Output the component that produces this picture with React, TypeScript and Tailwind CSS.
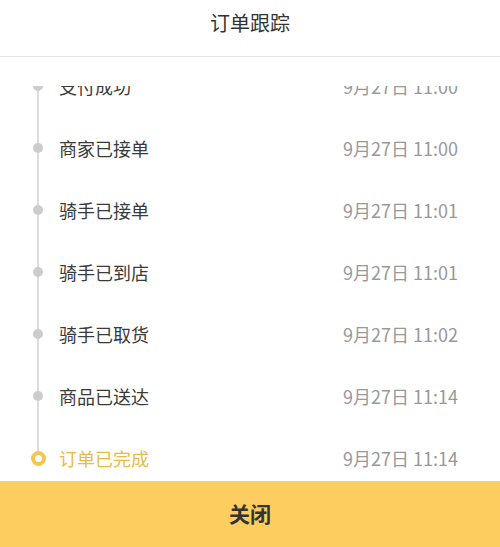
const steps = [
  { label: "支付成功", time: "9月27日 11:00" },
  { label: "商家已接单", time: "9月27日 11:00" },
  { label: "骑手已接单", time: "9月27日 11:01" },
  { label: "骑手已到店", time: "9月27日 11:01" },
  { label: "骑手已取货", time: "9月27日 11:02" },
  { label: "商品已送达", time: "9月27日 11:14" },
  { label: "订单已完成", time: "9月27日 11:14", done: true },
];

function Step({ label, time, done, last }: { label: string; time: string; done?: boolean; last: boolean }) {
  return (
    <div className="flex h-[62px] items-center">
      <div className="relative flex h-full w-[76px] shrink-0 items-center justify-center">
        <div className={`absolute left-[37px] top-0 w-[2px] bg-[#dcdcdc] ${last ? "bottom-1/2" : "bottom-0"}`} />
        {done ? (
          <div className="relative h-[15px] w-[15px] rounded-full border-[4.5px] border-[#f3c64f] bg-white" />
        ) : (
          <div className="relative h-[10px] w-[10px] rounded-full bg-[#cccccc]" />
        )}
      </div>
      <div className={`-ml-[17px] flex-1 text-[18px] ${done ? "text-[#e9bb42]" : "text-[#3a3a3a]"}`}>{label}</div>
      <div className="pr-[42px] text-[18px] text-[#999999]">{time}</div>
    </div>
  );
}

export default function App() {
  return (
    <div
      className="flex h-[547px] w-[500px] flex-col bg-white"
      style={{ fontFamily: '"Noto Sans CJK SC", "Noto Sans", sans-serif' }}
    >
      <div className="flex h-[57px] shrink-0 justify-center border-b border-[#e8e8e8] pt-[12px] text-[20px] leading-[22px] text-[#333333]">
        订单跟踪
      </div>
      <div className="h-[29px] shrink-0" />
      <div className="flex-1 overflow-hidden">
        <div className="-mt-[31px]">
          {steps.map((s, i) => (
            <Step key={i} {...s} last={i === steps.length - 1} />
          ))}
        </div>
      </div>
      <button className="flex h-[66px] shrink-0 items-center justify-center bg-[#fdcd5f] text-[21px] font-bold text-[#333333]">
        关闭
      </button>
    </div>
  );
}
